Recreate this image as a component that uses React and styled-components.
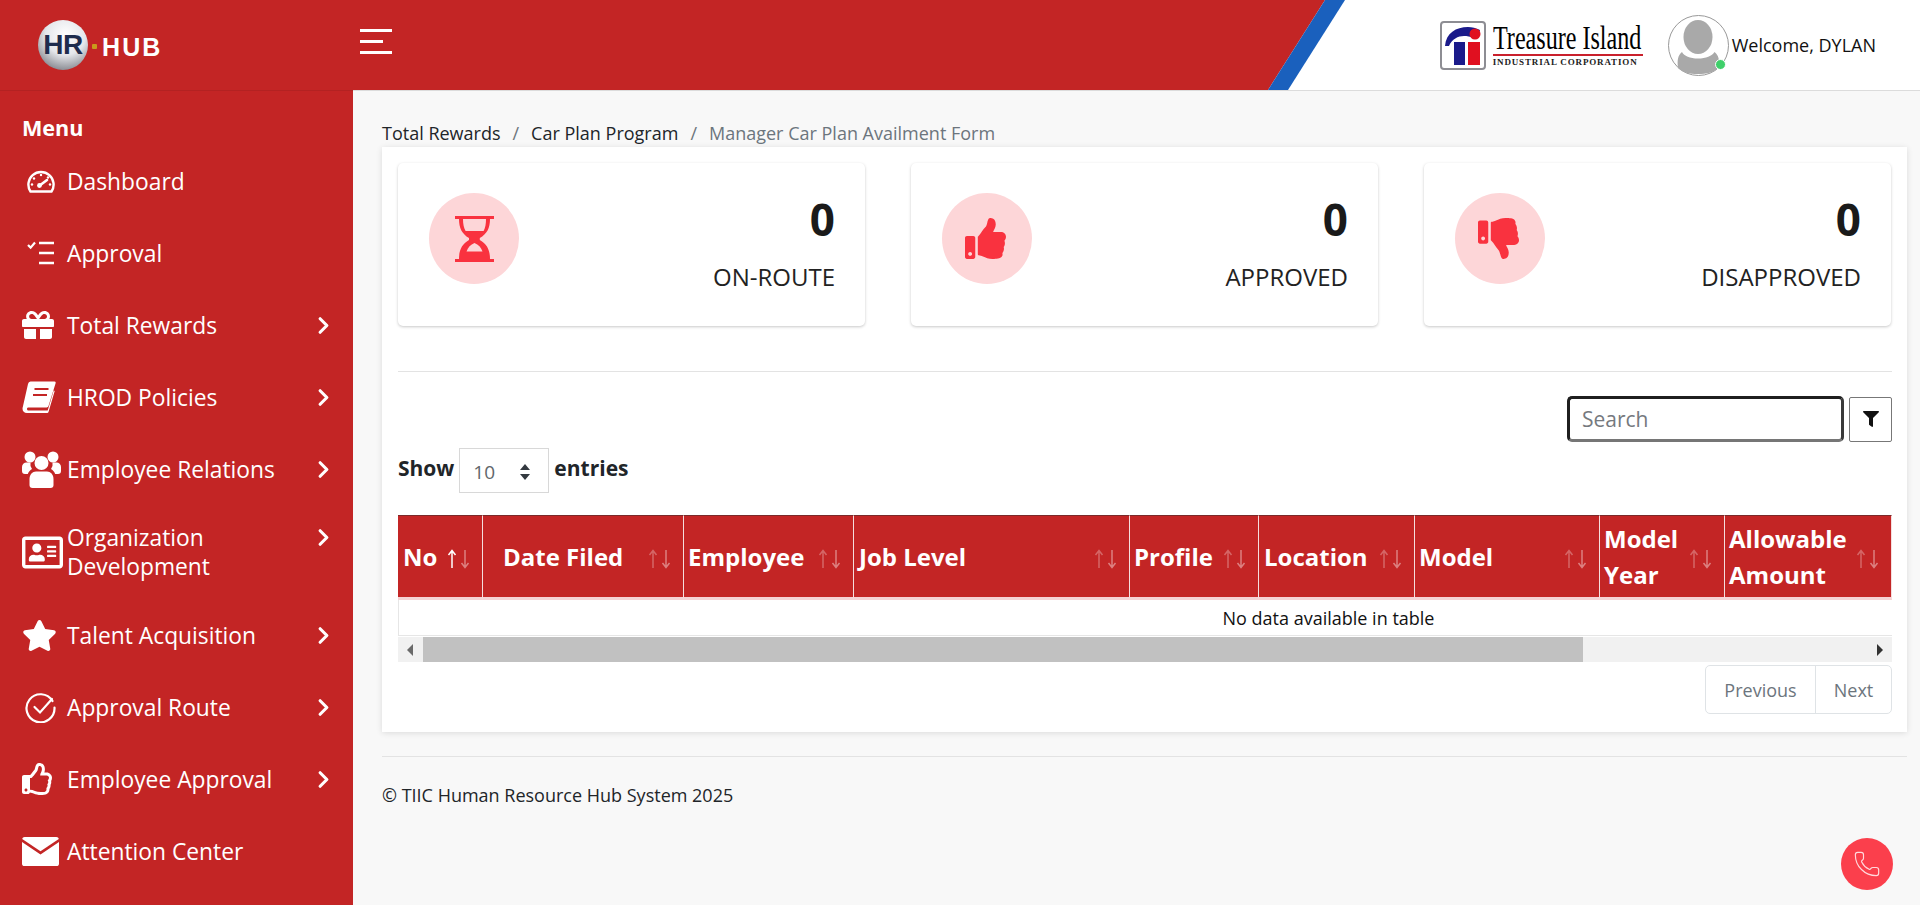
import React from 'react';
import styled, { createGlobalStyle } from 'styled-components';
import { FaGift, FaRegAddressCard, FaStar, FaRegThumbsUp, FaThumbsUp, FaThumbsDown, FaFilter } from 'react-icons/fa';
import { ChevronRight, Phone } from 'lucide-react';

const RED = '#c32525';
const ALERT = '#f9323f';

const Global = createGlobalStyle`
  html, body { margin: 0; padding: 0; height: 905px; overflow: hidden; background: #f8f8f8; }
  body { font-family: "Open Sans", "Liberation Sans", sans-serif; color: #212529; }
  * { box-sizing: border-box; }
`;

const Page = styled.div`
  display: flex;
  flex-direction: column;
  height: 905px;
  overflow: hidden;
`;

const Header = styled.header`
  position: relative;
  display: flex;
  align-items: center;
  flex: none;
  height: 91px;
  background: #fff;
  border-bottom: 1px solid #dcdcdc;
  &::before {
    content: '';
    position: absolute;
    inset: 0;
    background: ${RED};
    clip-path: polygon(0 0, 1325px 0, 1268px 100%, 0 100%);
  }
  &::after {
    content: '';
    position: absolute;
    inset: 0;
    background: #1a60bd;
    clip-path: polygon(1325px 0, 1345px 0, 1288px 100%, 1268px 100%);
  }
`;

const Brand = styled.div`
  position: relative;
  z-index: 1;
  display: flex;
  align-items: center;
  flex: none;
  width: 353px;
  height: 91px;
  margin-bottom: -1px;
  padding-left: 38px;
  border-bottom: 1px solid #b32222;
`;

const Sphere = styled.div`
  display: flex;
  align-items: center;
  justify-content: center;
  flex: none;
  width: 50px;
  height: 50px;
  border-radius: 50%;
  background: radial-gradient(circle at 55% 30%, #ffffff 0%, #e4e6ea 45%, #8f9198 78%, #4d4e55 100%);
  color: #1e2c4d;
  font: 700 28px "Liberation Sans", Arial, sans-serif;
  letter-spacing: -0.5px;
  white-space: nowrap;
`;

const BrandDot = styled.span`
  width: 5px;
  height: 5px;
  margin: 3px 5px 0 4px;
  background: #c99a1c;
  border-radius: 1px;
`;

const BrandWord = styled.span`
  margin-top: 4px;
  color: #fff;
  font: 700 25px "Liberation Sans", Arial, sans-serif;
  letter-spacing: 2.1px;
`;

const Burger = styled.button`
  position: relative;
  z-index: 1;
  display: flex;
  flex-direction: column;
  align-items: flex-start;
  gap: 8px;
  width: 32px;
  margin: -7px 0 0 7px;
  padding: 0;
  background: none;
  border: 0;
`;

const BurgerLine = styled.span`
  display: block;
  height: 3px;
  width: ${p => p.$w}px;
  background: #fff;
`;

const HeaderRight = styled.div`
  position: relative;
  z-index: 1;
  display: flex;
  align-items: center;
  margin-left: auto;
  padding-right: 44px;
`;

const Logo = styled.div`
  display: flex;
  align-items: center;
  gap: 7px;
  margin-right: 25px;
`;

const LogoMark = styled.div`
  display: flex;
  flex: none;
  width: 46px;
  height: 49px;
  padding: 3px;
  border: 2px solid #8d8d93;
  border-radius: 4px;
`;

const LogoText = styled.div`
  display: flex;
  flex-direction: column;
  width: 150px;
`;

const LogoName = styled.span`
  display: block;
  width: 205px;
  transform: scaleX(0.73);
  transform-origin: left center;
  color: #000;
  font: 400 33px/28px "Liberation Serif", "Times New Roman", serif;
  white-space: nowrap;
`;

const LogoSub = styled.span`
  display: block;
  margin-top: 2px;
  padding-top: 1px;
  border-top: 2px solid #c9202c;
  color: #222;
  font: 700 9px/10px "Liberation Serif", "Times New Roman", serif;
  letter-spacing: 0.85px;
  white-space: nowrap;
`;

const AvatarWrap = styled.div`
  position: relative;
  flex: none;
  width: 61px;
  height: 61px;
  border: 1px solid #999;
  border-radius: 50%;
`;

const OnlineDot = styled.span`
  position: absolute;
  right: 2px;
  bottom: 5px;
  width: 11px;
  height: 11px;
  background: #3fcf6a;
  border: 1px solid #fff;
  border-radius: 50%;
`;

const Welcome = styled.span`
  margin-left: 3px;
  color: #111;
  font-size: 18px;
  line-height: 24px;
`;

const Body = styled.div`
  display: flex;
  flex: 1;
  min-height: 0;
`;

const Sidebar = styled.aside`
  flex: none;
  width: 353px;
  padding-top: 23px;
  background: ${RED};
  color: #fff;
`;

const MenuTitle = styled.div`
  margin-bottom: 3px;
  padding-left: 22px;
  font-size: 21.6px;
  font-weight: 700;
  line-height: 28px;
`;

const NavRow = styled.div`
  display: flex;
  align-items: center;
  min-height: 72px;
  padding: 18px 22px;
  font-size: 22.8px;
  line-height: 29px;
`;

const NavIcon = styled.span`
  display: flex;
  align-items: center;
  flex: none;
  width: 45px;
  height: 29px;
  padding-left: ${p => p.$inset || 0}px;
`;

const NavLabel = styled.span`
  flex: 1;
`;

const NavChevron = styled(ChevronRight)`
  flex: none;
  margin-right: -6px;
  align-self: ${p => (p.$top ? 'flex-start' : 'center')};
  margin-top: ${p => (p.$top ? '1px' : '0')};
`;

const Main = styled.main`
  flex: 1;
  min-width: 0;
  padding: 30px 13px 0 29px;
`;

const Crumbs = styled.nav`
  display: flex;
  align-items: center;
  height: 24px;
  margin-bottom: 2px;
  font-size: 18px;
  line-height: 24px;
`;

const Crumb = styled.span`
  color: ${p => (p.$active ? '#6c757d' : '#212529')};
`;

const CrumbSep = styled.span`
  padding: 0 12px;
  color: #6c757d;
`;

const Panel = styled.section`
  height: 585px;
  padding: 16px 15px 0 16px;
  background: #fff;
  box-shadow: 0 1px 6px rgba(0, 0, 0, 0.12);
`;

const Stats = styled.div`
  display: grid;
  grid-template-columns: repeat(3, 1fr);
  gap: 46px;
  margin-right: 1px;
`;

const StatCard = styled.div`
  display: flex;
  align-items: flex-start;
  justify-content: space-between;
  height: 163px;
  padding: 30px 30px 0 31px;
  background: #fff;
  border-radius: 5px;
  box-shadow: 0 1px 3px rgba(0, 0, 0, 0.22);
`;

const StatIcon = styled.div`
  display: flex;
  align-items: center;
  justify-content: center;
  width: 90px;
  height: 91px;
  padding-right: ${p => p.$nudge || 0}px;
  color: ${ALERT};
  background: #fdd6d8;
  border-radius: 50%;
`;

const StatText = styled.div`
  text-align: right;
`;

const StatNumber = styled.div`
  color: #1a1a1a;
  font-size: 44px;
  font-weight: 700;
  line-height: 52px;
`;

const StatLabel = styled.div`
  margin-top: 17px;
  color: #222;
  font-size: 24px;
  line-height: 30px;
`;

const Rule = styled.hr`
  height: 1px;
  margin: 45px 0 24px;
  background: #e3e3e3;
  border: 0;
`;

const Toolbar = styled.div`
  display: flex;
  justify-content: flex-end;
  align-items: center;
  gap: 5px;
`;

const SearchInput = styled.input`
  width: 277px;
  height: 46px;
  padding: 0 12px;
  background: #fff;
  border-style: solid;
  border-width: 3px;
  border-color: #1f1f1f #3a3a3a #767676 #1f1f1f;
  border-radius: 5px;
  outline: none;
  font: 400 21px "Open Sans", sans-serif;
  &::placeholder {
    color: #75797e;
    opacity: 1;
  }
`;

const FilterButton = styled.button`
  display: flex;
  align-items: center;
  justify-content: center;
  width: 43px;
  height: 45px;
  padding: 0;
  color: #111;
  background: #fff;
  border: 1px solid #777;
  border-radius: 2px;
`;

const LengthRow = styled.div`
  display: flex;
  align-items: center;
  gap: 5px;
  height: 45px;
  margin: 6px 0 22px;
  color: #212529;
  font-size: 21px;
  font-weight: 700;
`;

const LengthText = styled.span`
  margin-bottom: 5px;
`;

const LengthSelect = styled.div`
  display: flex;
  align-items: center;
  justify-content: space-between;
  width: 90px;
  height: 45px;
  padding: 2px 17px 0 13px;
  color: #61666b;
  background: #fff;
  border: 1px solid #d8d8d8;
  font-size: 19px;
  font-weight: 400;
`;

const TableViewport = styled.div`
  width: 1494px;
  overflow: hidden;
`;

const Table = styled.table`
  width: 1860px;
  table-layout: fixed;
  border-collapse: separate;
  border-spacing: 0;
`;

const Th = styled.th`
  position: relative;
  height: 85px;
  padding: 0 36px 0 ${p => p.$pad || 5}px;
  color: #fff;
  background: ${RED};
  background-clip: padding-box;
  border-top: 1px solid #7a2a2a;
  border-right: 1px solid #f5dede;
  border-bottom: 3px solid #f6d2d4;
  font-size: 24px;
  font-weight: 700;
  line-height: 36px;
  text-align: left;
`;

const SortArrows = styled.svg`
  position: absolute;
  right: 11px;
  top: 50%;
  margin-top: -8px;
`;

const EmptyCell = styled.td`
  height: 36px;
  padding: 0;
  color: #111;
  background: #fff;
  border-left: 1px solid #e6e6e6;
  border-bottom: 1px solid #e6e6e6;
  font-size: 18px;
  text-align: center;
`;

const ScrollTrack = styled.div`
  display: flex;
  align-items: center;
  width: 1494px;
  height: 25px;
  margin-top: 1px;
  background: #f1f1f1;
`;

const ScrollButton = styled.span`
  display: flex;
  align-items: center;
  justify-content: center;
  flex: none;
  width: 25px;
  height: 25px;
`;

const ScrollThumb = styled.div`
  flex: none;
  width: 1160px;
  height: 25px;
  background: #c1c1c1;
`;

const ScrollRest = styled.div`
  flex: 1;
`;

const Pager = styled.div`
  display: flex;
  justify-content: flex-end;
  margin-top: 3px;
`;

const PagerGroup = styled.div`
  display: flex;
  height: 49px;
  background: #fff;
  border: 1px solid #dfe3e6;
  border-radius: 5px;
`;

const PagerItem = styled.span`
  display: flex;
  align-items: center;
  justify-content: center;
  width: ${p => p.$w}px;
  color: #6c757d;
  border-left: ${p => (p.$first ? '0' : '1px solid #dfe3e6')};
  font-size: 18px;
`;

const Footer = styled.footer`
  display: flex;
  align-items: center;
  height: 76px;
  margin-top: 24px;
  border-top: 1px solid #e3e3e3;
  color: #212529;
  font-size: 18px;
`;

const CallButton = styled.button`
  position: fixed;
  left: 1841px;
  top: 838px;
  display: flex;
  align-items: center;
  justify-content: center;
  width: 52px;
  height: 52px;
  padding: 0;
  color: #ffd9dc;
  background: #fb3f4c;
  border: 0;
  border-radius: 50%;
`;

const GaugeIcon = () => (
  <svg width="28" height="24" viewBox="0 0 28 24" fill="none">
    <path d="M3.5 22.5a12.6 12.6 0 1 1 21 0z" stroke="#fff" strokeWidth="2.4" strokeLinejoin="round" />
    <path d="M12 17l8-6" stroke="#fff" strokeWidth="2.6" strokeLinecap="round" />
    <circle cx="12.5" cy="16.5" r="2.4" fill="#fff" />
    <g fill="#fff">
      <circle cx="5" cy="15.5" r="1.2" /><circle cx="7" cy="9.5" r="1.2" /><circle cx="14" cy="6" r="1.2" /><circle cx="21" cy="8.5" r="1.2" /><circle cx="23" cy="15.5" r="1.2" />
    </g>
  </svg>
);

const ChecklistIcon = () => (
  <svg width="28" height="24" viewBox="0 0 28 24" fill="none" stroke="#fff">
    <path d="M1 4l2.6 2.6L8 1.5" strokeWidth="2.2" />
    <path d="M12 2h15M12 12h15M12 22h15" strokeWidth="2.6" />
  </svg>
);

const BookIcon = () => (
  <svg width="34" height="32" viewBox="0 0 34 32" fill="none">
    <path d="M8.5 0.5h23.8a1.4 1.4 0 0 1 1.3 1.8L26.5 25a2 2 0 0 1-1.9 1.5H6.5c-2.2 0-1.8 3 0 3H25.7l6-20 1 .5L26.5 31a1.4 1.4 0 0 1-1.3 1H5c-3.5 0-5.2-3-4.2-6L6 3a3.4 3.4 0 0 1 2.5-2.5z" fill="#fff" />
    <path d="M12.5 8h14M11 14h14" stroke={RED} strokeWidth="2" />
  </svg>
);

const PeopleIcon = () => (
  <svg width="39" height="37" viewBox="0 0 39 37" fill="#fff">
    <circle cx="8" cy="6" r="5.5" />
    <circle cx="31" cy="6" r="5.5" />
    <path d="M0 16a4.5 4.5 0 0 1 4.5-4.5h4a8 8 0 0 0 1.5 6.5c-2 1.2-3.5 3-4.2 5H3a3 3 0 0 1-3-3z" />
    <path d="M39 16a4.5 4.5 0 0 0-4.5-4.5h-4a8 8 0 0 1-1.5 6.5c2 1.2 3.5 3 4.2 5H36a3 3 0 0 0 3-3z" />
    <circle cx="19.5" cy="12" r="7" />
    <path d="M7.5 28c0-4.5 3-7.5 6.5-7.5h11c3.5 0 6.5 3 6.5 7.5v6a3 3 0 0 1-3 3h-18a3 3 0 0 1-3-3z" />
  </svg>
);

const RouteIcon = () => (
  <svg width="31" height="31" viewBox="0 0 31 31" fill="none" stroke="#fff" strokeWidth="2.2" strokeLinecap="round">
    <path d="M27.5 9A14 14 0 1 0 29.5 15.5" />
    <path d="M9.5 15l5.5 5.5L27 7" />
  </svg>
);

const MailIcon = () => (
  <svg width="37" height="29" viewBox="0 0 37 29">
    <path d="M2.6 0h31.8c1.2 0 2.2.8 2.4 2L18.5 14.3 .2 2C.4.8 1.4 0 2.6 0z" fill="#fff" />
    <path d="M0 5l18.5 12.4L37 5v21.4a2.6 2.6 0 0 1-2.6 2.6H2.6A2.6 2.6 0 0 1 0 26.4z" fill="#fff" />
  </svg>
);

const HourglassIcon = () => (
  <svg width="39" height="46" viewBox="0 0 39 46" fill="currentColor">
    <rect x="0" y="0" width="39" height="3" />
    <rect x="0" y="43" width="39" height="3" />
    <path d="M4 3h4c0 5 .8 9 2.6 12h18c1.7-3 2.4-7 2.4-12h4c0 9-3 15-10.2 19v2C32 28 35 34 35 43H4c0-9 3-15 10-19v-2C7 18 4 12 4 3z" />
    <path d="M19.5 27c-4 1.6-6.6 4.5-8 8.5h16c-1.4-4-4-6.9-8-8.5z" fill="#fdd6d8" />
  </svg>
);

const AvatarArt = () => (
  <svg width="59" height="59" viewBox="0 0 59 59">
    <ellipse cx="29" cy="21" rx="14.5" ry="17" fill="#a9a9a9" />
    <path d="M9 52c-1-8 0-13 4-16 2 4 8 6.5 16 6.5S43 40 45.5 36c4 3 5.5 8 4 16-5 4.5-12 6-20.5 6S13 56.5 9 52z" fill="#a9a9a9" />
  </svg>
);

const TreasureMark = () => (
  <svg width="36" height="39" viewBox="0 0 36 39">
    <path d="M0 20C1 7 11 1 23 1c4 0 8 1 12 3-1 4-3 7-6 8-4-1.5-7-2-10-2-6 0-12 3-15 10z" fill="#1a1a8a" />
    <circle cx="30" cy="8" r="5.5" fill="#e01020" />
    <rect x="9" y="16" width="11" height="23" fill="#1a1a8a" />
    <rect x="23" y="16" width="12" height="23" fill="#e01020" />
  </svg>
);

const Arrows = ({ active }) => (
  <SortArrows width="24" height="20" viewBox="0 0 24 20" fill="none" strokeWidth="1.5">
    <path d="M5 19V2M1.5 6L5 1.5 8.5 6" stroke="#fff" strokeOpacity={active ? 1 : 0.3} />
    <path d="M18 1v17M14.5 14L18 18.5 21.500 14" stroke="#fff" strokeOpacity={0.42} />
  </SortArrows>
);

const navItems = [
  { label: 'Dashboard', icon: <GaugeIcon />, inset: 5 },
  { label: 'Approval', icon: <ChecklistIcon />, inset: 5 },
  { label: 'Total Rewards', icon: <FaGift size={32} />, more: true },
  { label: 'HROD Policies', icon: <BookIcon />, more: true },
  { label: 'Employee Relations', icon: <PeopleIcon />, more: true },
  { label: <>Organization<br />Development</>, icon: <FaRegAddressCard size={41} />, more: true, top: true },
  { label: 'Talent Acquisition', icon: <FaStar size={35} />, more: true },
  { label: 'Approval Route', icon: <RouteIcon />, inset: 3, more: true },
  { label: 'Employee Approval', icon: <FaRegThumbsUp size={32} />, more: true },
  { label: 'Attention Center', icon: <MailIcon /> },
];

const columns = [
  { label: 'No', w: 85, active: true },
  { label: 'Date Filed', w: 201, pad: 20 },
  { label: 'Employee', w: 170, pad: 4 },
  { label: 'Job Level', w: 276 },
  { label: 'Profile', w: 129, pad: 4 },
  { label: 'Location', w: 156 },
  { label: 'Model', w: 185, pad: 4 },
  { label: 'Model Year', w: 125, pad: 4 },
  { label: 'Allowable Amount', w: 167, pad: 4 },
  { label: '', w: 366 },
];

const stats = [
  { n: 'ON-ROUTE', icon: <HourglassIcon /> },
  { n: 'APPROVED', icon: <FaThumbsUp size={41} />, nudge: 3 },
  { n: 'DISAPPROVED', icon: <FaThumbsDown size={41} />, nudge: 3 },
];

export default function App() {
  return (
    <Page>
      <Global />
      <Header>
        <Brand>
          <Sphere>HR</Sphere>
          <BrandDot />
          <BrandWord>HUB</BrandWord>
        </Brand>
        <Burger aria-label="Toggle menu">
          <BurgerLine $w={32} />
          <BurgerLine $w={23} />
          <BurgerLine $w={32} />
        </Burger>
        <HeaderRight>
          <Logo>
            <LogoMark><TreasureMark /></LogoMark>
            <LogoText>
              <LogoName>Treasure Island</LogoName>
              <LogoSub>INDUSTRIAL CORPORATION</LogoSub>
            </LogoText>
          </Logo>
          <AvatarWrap>
            <AvatarArt />
            <OnlineDot />
          </AvatarWrap>
          <Welcome>Welcome, DYLAN</Welcome>
        </HeaderRight>
      </Header>
      <Body>
        <Sidebar>
          <MenuTitle>Menu</MenuTitle>
          {navItems.map((item, i) => (
            <NavRow key={i}>
              <NavIcon $inset={item.inset}>{item.icon}</NavIcon>
              <NavLabel>{item.label}</NavLabel>
              {item.more && <NavChevron size={27} strokeWidth={2.8} $top={item.top} />}
            </NavRow>
          ))}
        </Sidebar>
        <Main>
          <Crumbs>
            <Crumb>Total Rewards</Crumb>
            <CrumbSep>/</CrumbSep>
            <Crumb>Car Plan Program</Crumb>
            <CrumbSep>/</CrumbSep>
            <Crumb $active>Manager Car Plan Availment Form</Crumb>
          </Crumbs>
          <Panel>
            <Stats>
              {stats.map(s => (
                <StatCard key={s.n}>
                  <StatIcon $nudge={s.nudge}>{s.icon}</StatIcon>
                  <StatText>
                    <StatNumber>0</StatNumber>
                    <StatLabel>{s.n}</StatLabel>
                  </StatText>
                </StatCard>
              ))}
            </Stats>
            <Rule />
            <Toolbar>
              <SearchInput placeholder="Search" />
              <FilterButton aria-label="Filter"><FaFilter size={16} /></FilterButton>
            </Toolbar>
            <LengthRow>
              <LengthText>Show</LengthText>
              <LengthSelect>
                10
                <svg width="12" height="16" viewBox="0 0 12 16" fill="#343a40">
                  <path d="M6 0l5 6H1zM6 16l5-6H1z" />
                </svg>
              </LengthSelect>
              <LengthText>entries</LengthText>
            </LengthRow>
            <TableViewport>
              <Table>
                <colgroup>
                  {columns.map((c, i) => <col key={i} style={{ width: c.w }} />)}
                </colgroup>
                <thead>
                  <tr>
                    {columns.map((c, i) => (
                      <Th key={i} $pad={c.pad}>
                        {c.label}
                        <Arrows active={c.active} />
                      </Th>
                    ))}
                  </tr>
                </thead>
                <tbody>
                  <tr>
                    <EmptyCell colSpan={columns.length}>No data available in table</EmptyCell>
                  </tr>
                </tbody>
              </Table>
            </TableViewport>
            <ScrollTrack>
              <ScrollButton>
                <svg width="7" height="12" viewBox="0 0 7 12" fill="#6a6a6a"><path d="M6 0v12L0 6z" /></svg>
              </ScrollButton>
              <ScrollThumb />
              <ScrollRest />
              <ScrollButton>
                <svg width="7" height="12" viewBox="0 0 7 12" fill="#333"><path d="M1 0v12l6-6z" /></svg>
              </ScrollButton>
            </ScrollTrack>
            <Pager>
              <PagerGroup>
                <PagerItem $first $w={109}>Previous</PagerItem>
                <PagerItem $w={76}>Next</PagerItem>
              </PagerGroup>
            </Pager>
          </Panel>
          <Footer>© TIIC Human Resource Hub System 2025</Footer>
        </Main>
      </Body>
      <CallButton aria-label="Call"><Phone size={28} strokeWidth={1} /></CallButton>
    </Page>
  );
}
